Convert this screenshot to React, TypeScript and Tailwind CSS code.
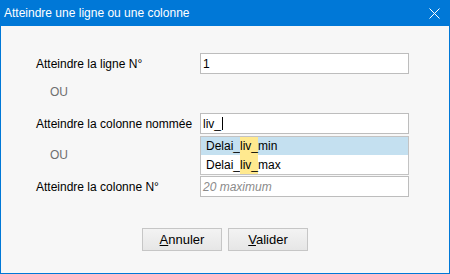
import React from 'react';

const font = { fontFamily: '"Liberation Sans", Arial, sans-serif' };

function Suggestion({ pre, match, post, active }: { pre: string; match: string; post: string; active?: boolean }) {
  return (
    <div className={`flex items-stretch pl-[5px] text-[12px] text-black ${active ? 'h-[18px] bg-[#c4e0f0]' : 'h-[19px] bg-white'}`}>
      <span className="flex items-center">{pre}</span>
      <span className="flex items-center bg-[#ffe98f]">{match}</span>
      <span className="flex items-center">{post}</span>
    </div>
  );
}

export default function App() {
  return (
    <div className="w-[450px] h-[274px] bg-[#0078d7] p-px pt-0 flex flex-col" style={font}>
      {/* Title bar */}
      <div className="h-[26px] flex items-center justify-between pl-[3px] pr-[9px] text-white text-[12px]">
        <span>Atteindre une ligne ou une colonne</span>
        <svg width="11" height="11" viewBox="0 0 11 11" fill="none">
          <path d="M0.5 0.5L10.5 10.5M10.5 0.5L0.5 10.5" stroke="white" strokeWidth="1" />
        </svg>
      </div>

      {/* Body */}
      <div className="flex-1 bg-[#f7f7f7] flex flex-col pt-[27px] text-[12px] text-black">
        <div className="flex items-center h-[21px]">
          <span className="w-[199px] pl-[35px]">Atteindre la ligne N°</span>
          <div className="w-[209px] h-[21px] border border-[#bdbdbd] bg-white flex items-center pl-[2px]">1</div>
        </div>

        <div className="h-[39px] flex items-center pl-[49px] pb-[3px] text-[#6f6f6f]">OU</div>

        <div className="flex items-center h-[21px] relative">
          <span className="w-[199px] pl-[35px]">Atteindre la colonne nommée</span>
          <div className="w-[209px] h-[21px] border border-[#bdbdbd] bg-white flex items-center pl-[2px]">
            <span>liv_</span>
            <span className="w-px h-[13px] bg-black ml-[1px]" />
          </div>
          {/* Autocomplete popup */}
          <div className="absolute left-[199px] top-[23px] w-[209px] border border-[#c3c3c3] bg-white z-10">
            <Suggestion pre="Delai_" match="liv_" post="min" active />
            <Suggestion pre="Delai_" match="liv_" post="max" />
          </div>
        </div>

        <div className="h-[42px] flex items-center pl-[49px] text-[#6f6f6f]">OU</div>

        <div className="flex items-center h-[21px]">
          <span className="w-[199px] pl-[35px]">Atteindre la colonne N°</span>
          <div className="w-[209px] h-[21px] border border-[#bdbdbd] bg-white flex items-center pl-[2px] italic text-[#8a8a8a]">
            20 maximum
          </div>
        </div>

        <div className="flex gap-[6px] pl-[141px] mt-[31px]">
          <button className="w-[80px] h-[23px] border border-[#c6c6c6] bg-gradient-to-b from-[#f3f3f3] to-[#e6e6e6] text-[13px] text-black flex items-center justify-center">
            <span><span className="underline">A</span>nnuler</span>
          </button>
          <button className="w-[80px] h-[23px] border border-[#c6c6c6] bg-gradient-to-b from-[#f3f3f3] to-[#e6e6e6] text-[13px] text-black flex items-center justify-center">
            <span><span className="underline">V</span>alider</span>
          </button>
        </div>
      </div>
    </div>
  );
}
